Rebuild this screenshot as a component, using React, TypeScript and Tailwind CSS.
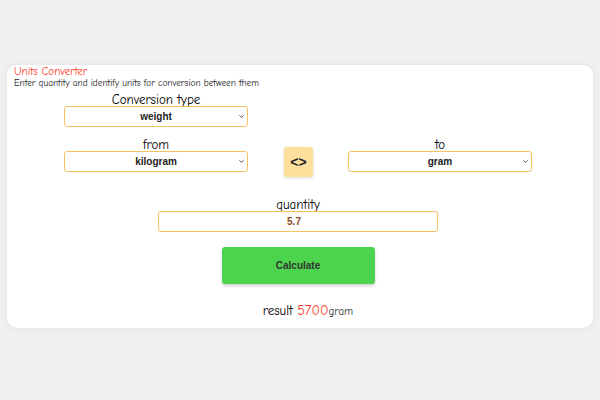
import { ChevronDown } from "lucide-react";

const comic = "font-['Comic_Sans_MS','Comic_Neue','DejaVu_Sans',sans-serif]";
const arial = "font-['Liberation_Sans',Arial,sans-serif]";

const Select = ({ value }: { value: string }) => {
  return (
    <div className="relative w-[184px] h-[21px]">
      <select
        defaultValue={value}
        className={`block appearance-none w-full h-full bg-white border border-[#f5c263] rounded-[3px] text-center text-[10px] font-bold text-[#222] ${arial} outline-none`}
      >
        <option value={value}>{value}</option>
      </select>
      <ChevronDown
        className="absolute right-[3px] top-[7px] pointer-events-none text-[#333]"
        size={7}
        strokeWidth={3}
      />
    </div>
  );
};

const App = () => {
  return (
    <main className="w-[600px] h-[400px] bg-[#f0f0f0] pt-[65px] px-[7px]">
      <div className="bg-white rounded-[10px] h-[263px] shadow-[0_0_6px_rgba(0,0,0,0.06)] pt-[1px] pl-[7px]">
        <h1 className={`${comic} text-[11px] leading-[12px] text-[#ff3b1f]`}>
          Units Converter
        </h1>
        <p className={`${comic} text-[9.3px] leading-[10px] text-[#1a1a1a]`}>
          Enter quantity and identify units for conversion between them
        </p>

        <div className="w-[468px] ml-[50px] flex flex-col">
          <div className="flex flex-col items-center w-[184px] mt-[5px]">
            <span className={`${comic} text-[13px] leading-[13px] text-black`}>
              Conversion type
            </span>
            <Select value="weight" />
          </div>

          <div className="flex flex-row items-end mt-[11px]">
            <div className="flex flex-col items-center w-[184px]">
              <span className={`${comic} text-[13px] leading-[13px] text-black`}>
                from
              </span>
              <Select value="kilogram" />
            </div>
            <button
              className={`ml-[36px] mb-[-5px] w-[29px] h-[30px] rounded-[3px] bg-[#ffdf9c] shadow-[0_1px_3px_rgba(0,0,0,0.15)] ${arial} font-bold text-[14px] text-[#222]`}
            >
              &lt;&gt;
            </button>
            <div className="flex flex-col items-center w-[184px] ml-[35px]">
              <span className={`${comic} text-[13px] leading-[13px] text-black`}>
                to
              </span>
              <Select value="gram" />
            </div>
          </div>

          <div className="flex flex-col items-center mt-[26px]">
            <span className={`${comic} text-[13px] leading-[13px] text-black`}>
              quantity
            </span>
            <input
              defaultValue="5.7"
              className={`block w-[280px] h-[21px] bg-white border border-[#f5c263] rounded-[3px] text-center pr-[8px] text-[10px] font-bold text-[#8b4a22] ${arial} outline-none`}
            />
          </div>

          <div className="flex justify-center mt-[15px]">
            <button
              className={`w-[153px] h-[37px] rounded-[3px] bg-[#4cd44e] shadow-[0_2px_3px_rgba(0,0,0,0.18)] ${arial} font-bold text-[10px] text-[#333]`}
            >
              Calculate
            </button>
          </div>

          <div className="flex justify-center items-baseline mt-[19px] ml-[20px] leading-[16px]">
            <span className={`${comic} text-[13px] text-black`}>result&nbsp;</span>
            <span className={`${comic} text-[14px] text-[#ff3b1f]`}>5700</span>
            <span className={`${comic} text-[11px] text-[#333]`}>gram</span>
          </div>
        </div>
      </div>
    </main>
  );
};

export default App;
